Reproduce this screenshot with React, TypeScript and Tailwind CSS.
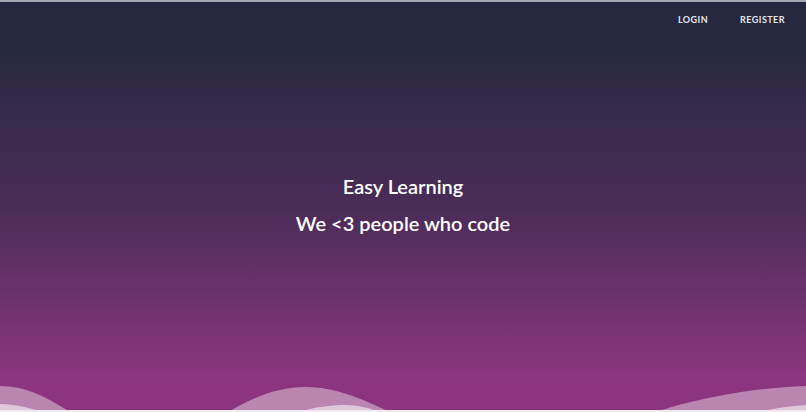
export default function App() {
  return (
    <div
      className="relative w-full h-[412px] overflow-hidden border-t-2 border-[#a4a8b4] bg-gradient-to-b from-[#262840] from-[10%] via-[#4a2c58] via-[50%] to-[#8c357e] to-[92%]"
      style={{ fontFamily: 'Lato, "Open Sans", sans-serif' }}
    >
      {/* Nav */}
      <nav className="flex justify-end items-center gap-8 pt-[11px] pr-[21px]">
        <a className="text-[9px] font-bold tracking-[0.05em] text-[#e6e6ee]">LOGIN</a>
        <a className="text-[9px] font-bold tracking-[0.05em] text-[#e6e6ee]">REGISTER</a>
      </nav>

      {/* Hero */}
      <div className="flex flex-col items-center pt-[147px] text-white">
        <h1 className="text-[20px] font-semibold leading-[24px]">Easy Learning</h1>
        <h2 className="mt-[13px] text-[20px] font-semibold leading-[24px]">We &lt;3 people who code</h2>
      </div>

      {/* Waves */}
      <svg
        className="absolute bottom-0 left-0 w-full h-[32px]"
        viewBox="0 0 806 32"
        preserveAspectRatio="none"
      >
        <path
          d="M0,6 C25,6 45,16 70,32 L228,32 C255,16 280,7 305,7 C335,7 360,18 390,32 L655,32 C700,18 750,8 806,6 L806,32 L0,32 Z"
          fill="#ffffff"
          fillOpacity="0.4"
        />
        <path
          d="M0,24 C15,24 30,28 42,32 L300,32 C315,27 330,25 345,25 C360,25 372,29 380,32 L760,32 C775,28 790,26 806,25 L806,32 L0,32 Z"
          fill="#ffffff"
          fillOpacity="0.55"
        />
        <rect x="0" y="30" width="806" height="2" fill="#f1e8f0" />
      </svg>
    </div>
  );
}
